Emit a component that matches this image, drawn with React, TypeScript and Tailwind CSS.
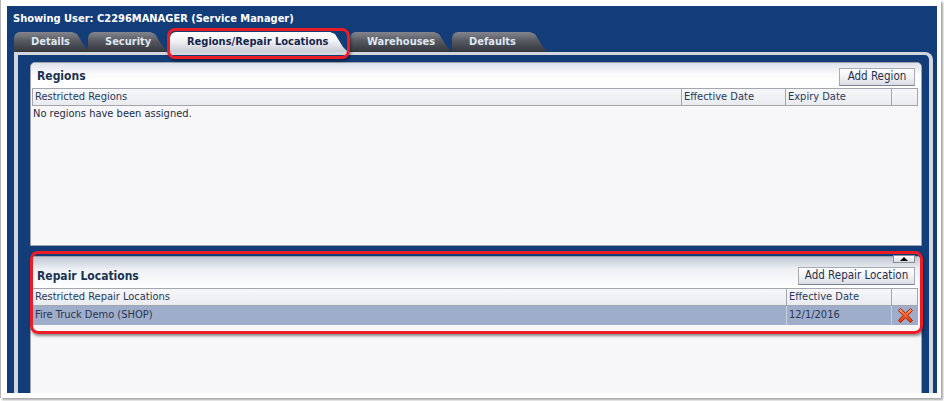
import React from "react";

const FONT = "font-['DejaVu_Sans_Condensed','DejaVu_Sans',sans-serif]";

function Tab({ label, cls, active }: { label: string; cls: string; active?: boolean }) {
  return (
    <div
      className={
        "h-[20px] flex items-center pl-[17px] rounded-tl-[6px] text-[11px] font-bold [clip-path:polygon(0_0,calc(100%-18px)_0,calc(100%-13px)_2px,calc(100%-5px)_15px,100%_100%,0_100%)] " +
        (active
          ? "bg-[linear-gradient(#ffffff,#f1f2f5_45%,#c6cad3)] text-[#14264a] "
          : "bg-[linear-gradient(#83868e,#565960_45%,#33363d)] text-[#dfe7f3] ") +
        cls
      }
    >
      {label}
    </div>
  );
}

function AddButton({ label, cls }: { label: string; cls: string }) {
  return (
    <div
      className={
        "h-[18px] flex items-center justify-center border border-[#a5aab4] border-b-[#7d838f] bg-[linear-gradient(#ffffff,#f2f3f6_50%,#d9dde5)] text-[11.5px] text-[#1e2f4e] " +
        cls
      }
    >
      {label}
    </div>
  );
}

function HeadCell({ label, cls }: { label?: string; cls: string }) {
  return (
    <div className={"h-full flex items-center pl-[2px] border-r border-[#a3a6ac] text-[11px] text-[#26395a] " + cls}>
      {label}
    </div>
  );
}

function RedX() {
  return (
    <svg width="17" height="17" viewBox="0 0 17 17">
      <defs>
        <linearGradient id="xg" x1="0" y1="0" x2="0" y2="1">
          <stop offset="0" stopColor="#ffb27a" />
          <stop offset="0.45" stopColor="#ff6224" />
          <stop offset="1" stopColor="#e83a0c" />
        </linearGradient>
      </defs>
      <path
        d="M1.5 3.5 L3.5 1.5 L8.5 6.2 L13.5 1.5 L15.5 3.5 L10.8 8.5 L15.5 13.5 L13.5 15.5 L8.5 10.8 L3.5 15.5 L1.5 13.5 L6.2 8.5 Z"
        fill="url(#xg)"
        stroke="#a81600"
        strokeWidth="1"
        strokeLinejoin="round"
      />
    </svg>
  );
}

export default function App() {
  return (
    <div className={"w-[944px] h-[401px] bg-white relative overflow-hidden " + FONT}>
      <div className="w-[941px] h-[398px] bg-white border-l border-[#b5b5b5] shadow-[2px_2px_2px_rgba(0,0,0,0.35)] pl-[6px] pt-[6px]">
        <div className="w-[930px] h-[387px] bg-[#133d79] overflow-hidden flex flex-col">
          {/* title */}
          <div className="h-[26px] shrink-0 flex items-center pl-[6px] text-white font-bold text-[11px]">
            Showing User: C2296MANAGER (Service Manager)
          </div>
          {/* tabs */}
          <div className="h-[20px] shrink-0 flex pl-[7px]">
            <Tab label="Details" cls="w-[76px]" />
            <Tab label="Security" cls="w-[80px] ml-[-2px]" />
            <Tab label="Regions/Repair Locations" cls="w-[178px] ml-[2px]" active />
            <Tab label="Warehouses" cls="w-[102px] ml-[2px]" />
            <Tab label="Defaults" cls="w-[96px]" />
          </div>
          {/* frame */}
          <div className="ml-[7px] w-[919px] flex-1 border-t-[3px] border-l-[4px] border-r-[4px] border-[#d3d6dd] rounded-tr-[8px] pt-[7px] pl-[12px] pr-[7px] flex flex-col">
            {/* Regions panel */}
            <div className="w-[892px] h-[184px] shrink-0 border border-[#9da2ab] rounded-t-[5px] bg-[#f7f7f9] flex flex-col overflow-hidden">
              <div className="h-[25px] shrink-0 flex items-center justify-between pl-[6px] pr-[6px] bg-[linear-gradient(#dde1e9,#fbfbfc_45%,#ffffff)]">
                <span className="text-[12px] font-bold text-[#1b3350] mt-[1px]">Regions</span>
                <AddButton label="Add Region" cls="w-[76px] mt-[3px]" />
              </div>
              <div className="ml-[1px] w-[886px] h-[18px] shrink-0 flex border-t border-b border-l border-[#a3a6ac] bg-[linear-gradient(#f6f7f9,#e9ebef)]">
                <HeadCell label="Restricted Regions" cls="w-[649px]" />
                <HeadCell label="Effective Date" cls="w-[104px]" />
                <HeadCell label="Expiry Date" cls="w-[106px]" />
                <HeadCell cls="w-[26px]" />
              </div>
              <div className="pl-[2px] h-[16px] flex items-center text-[11px] text-[#1c2a44]">
                No regions have been assigned.
              </div>
            </div>
            {/* Repair Locations panel */}
            <div className="relative mt-[10px] w-[892px] flex-1 border border-b-0 border-[#9da2ab] rounded-t-[5px] bg-[#f7f7f9] flex flex-col">
              <div className="absolute right-[6px] top-[-2px] w-[22px] h-[8px] border border-[#8a8e96] bg-[linear-gradient(#ffffff,#d8dbe2)] flex items-center justify-center">
                <div className="w-0 h-0 border-l-[4px] border-r-[4px] border-b-[4px] border-l-transparent border-r-transparent border-b-black" />
              </div>
              <div className="h-[31px] shrink-0 flex items-center justify-between pl-[6px] pr-[6px] rounded-t-[5px] bg-[linear-gradient(#bfc6d4,#eef0f4_40%,#ffffff)]">
                <span className="text-[12px] font-bold text-[#1b3350] mt-[7px]">Repair Locations</span>
                <AddButton label="Add Repair Location" cls="w-[117px] mt-[6px]" />
              </div>
              <div className="ml-[1px] w-[886px] h-[18px] shrink-0 flex border-t border-b border-l border-[#a3a6ac] bg-[linear-gradient(#f6f7f9,#e9ebef)]">
                <HeadCell label="Restricted Repair Locations" cls="w-[754px]" />
                <HeadCell label="Effective Date" cls="w-[105px]" />
                <HeadCell cls="w-[26px]" />
              </div>
              <div className="ml-[1px] w-[886px] h-[19px] shrink-0 flex bg-[#9eadc9] text-[11px] text-[#2a3552]">
                <div className="w-[755px] h-full flex items-center pl-[3px] border-r border-[#c7cfdf]">Fire Truck Demo (SHOP)</div>
                <div className="w-[105px] h-full flex items-center pl-[2px] border-r border-[#c7cfdf]">12/1/2016</div>
                <div className="w-[26px] h-full flex items-center justify-center">
                  <RedX />
                </div>
              </div>
            </div>
          </div>
        </div>
      </div>
      {/* annotation highlights */}
      <div className="absolute left-[167px] top-[28px] w-[183px] h-[31px] border-[3px] border-[#ec1c24] rounded-[8px] shadow-[1px_2px_3px_rgba(0,0,0,0.45)]" />
      <div className="absolute left-[30px] top-[251px] w-[893px] h-[83px] border-[3px] border-[#ec1c24] rounded-[8px] shadow-[1px_2px_3px_rgba(0,0,0,0.45)]" />
    </div>
  );
}
